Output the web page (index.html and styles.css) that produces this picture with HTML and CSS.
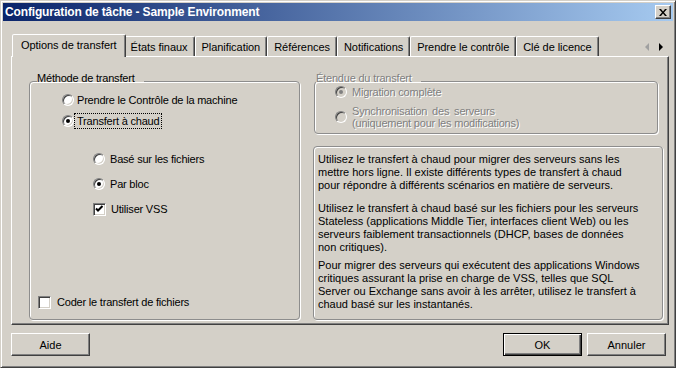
FILE: index.html
```html
<!DOCTYPE html>
<html>
  <head>
    <meta charset="UTF-8" />
    <title>Configuration de tâche - Sample Environment</title>
    <link rel="stylesheet" href="styles.css">
  </head>

  <body>
    <div class="window">
      <div class="titlebar">
        <span class="title">Configuration de tâche - Sample Environment</span>
        <span class="close">
          <svg width="8" height="7" viewBox="0 0 8 7"><path d="M0 0h2l2 2.5L6 0h2L5 3.5 8 7H6L4 4.5 2 7H0l3-3.5z" fill="#000"/></svg>
        </span>
      </div>

      <div class="tabs">
        <div class="tab active">Options de transfert</div>
        <div class="tab">États finaux</div>
        <div class="tab">Planification</div>
        <div class="tab">Références</div>
        <div class="tab">Notifications</div>
        <div class="tab">Prendre le contrôle</div>
        <div class="tab">Clé de licence</div>
        <div class="tab-scroll">
          <svg width="4" height="8" viewBox="0 0 4 8"><path d="M4 0v8L0 4z" fill="#a0a0a0"/></svg>
          <svg width="4" height="8" viewBox="0 0 4 8"><path d="M0 0v8l4-4z" fill="#000"/></svg>
        </div>
      </div>

      <div class="panel">
        <fieldset class="group method">
          <legend class="caption"><span>Méthode de transfert</span></legend>
          <div class="row main">
            <span class="radio"></span>
            <span class="lbl">Prendre le Contrôle de la machine</span>
          </div>
          <div class="row main">
            <span class="radio checked"></span>
            <span class="lbl focus">Transfert à chaud</span>
          </div>
          <div class="sub">
            <div class="row">
              <span class="radio"></span>
              <span class="lbl">Basé sur les fichiers</span>
            </div>
            <div class="row">
              <span class="radio checked"></span>
              <span class="lbl">Par bloc</span>
            </div>
            <div class="row">
              <span class="check">
                <svg width="9" height="9" viewBox="0 0 9 9"><path d="M1 3.5l2 2 4.5-4.5" fill="none" stroke="#000" stroke-width="2"/></svg>
              </span>
              <span class="lbl">Utiliser VSS</span>
            </div>
          </div>
          <div class="row encode">
            <span class="check"></span>
            <span class="lbl">Coder le transfert de fichiers</span>
          </div>
        </fieldset>

        <div class="side">
          <fieldset class="group scope disabled">
            <legend class="caption"><span>Étendue du transfert</span></legend>
            <div class="row">
              <span class="radio checked"></span>
              <span class="lbl">Migration complète</span>
            </div>
            <div class="row sync">
              <span class="radio"></span>
              <span class="lbl"><span class="spaced">Synchronisation des serveurs</span><br>(uniquement pour les modifications)</span>
            </div>
          </fieldset>

          <div class="info">
            <p>Utilisez le transfert à chaud pour migrer des serveurs sans les<br>mettre hors ligne. Il existe différents types de transfert à chaud<br>pour répondre à différents scénarios en matière de serveurs.</p>
            <p>Utilisez le transfert à chaud basé sur les fichiers pour les serveurs<br>Stateless (applications Middle Tier, interfaces client Web) ou les<br>serveurs faiblement transactionnels (DHCP, bases de données<br>non critiques).</p>
            <p class="last">Pour migrer des serveurs qui exécutent des applications Windows<br>critiques assurant la prise en charge de VSS, telles que SQL<br>Server ou Exchange sans avoir à les arrêter, utilisez le transfert à<br>chaud basé sur les instantanés.</p>
          </div>
        </div>
      </div>

      <div class="buttons">
        <button class="help">Aide</button>
        <button class="default">OK</button>
        <button>Annuler</button>
      </div>
    </div>
  </body>
</html>
```

FILE: styles.css
```css
html, body {
  margin: 0;
  padding: 0;
  background-color: #d4d0c8;
  font-family: "Liberation Sans", Arial, sans-serif;
  font-size: 11px;
  color: #000;
}

.window {
  width: 676px;
  height: 368px;
  box-sizing: border-box;
  display: flex;
  flex-direction: column;
  padding: 2px;
  border: 1px solid;
  border-color: #d4d0c8 #404040 #404040 #d4d0c8;
  box-shadow: inset 1px 1px #fff, inset -1px -1px #808080;
}

/* title bar */
.titlebar {
  height: 18px;
  display: flex;
  align-items: center;
  padding-left: 2px;
  background: linear-gradient(to right, #0a246a, #a6caf0);
}

.title {
  flex: 1;
  color: #fff;
  font-weight: bold;
  font-size: 12px;
  letter-spacing: -0.15px;
}

.close {
  width: 16px;
  height: 14px;
  box-sizing: border-box;
  margin-right: 2px;
  display: flex;
  align-items: center;
  justify-content: center;
  background-color: #d4d0c8;
  border: 1px solid;
  border-color: #fff #404040 #404040 #fff;
  box-shadow: inset -1px -1px #808080;
}

/* tabs */
.tabs {
  height: 22px;
  margin-top: 13px;
  padding-left: 11px;
  display: flex;
  align-items: flex-end;
  position: relative;
  z-index: 1;
}

.tab {
  height: 20px;
  box-sizing: border-box;
  padding: 0 6px;
  display: flex;
  align-items: center;
  border: 1px solid;
  border-bottom: none;
  border-color: #fff #404040 transparent #fff;
  border-radius: 2px 2px 0 0;
  box-shadow: inset -1px 0 #808080;
  letter-spacing: -0.05px;
}

.tab.active {
  height: 23px;
  margin: 0 -2px -1px;
  padding: 0 8px 2px;
  background-color: #d4d0c8;
  position: relative;
}

.tab-scroll {
  margin-left: auto;
  margin-right: 10px;
  align-self: center;
  display: flex;
  gap: 10px;
  padding-top: 4px;
}

/* panel */
.panel {
  height: 269px;
  box-sizing: border-box;
  margin: 0 4px 0 8px;
  padding: 19px 5px 4px 17px;
  display: flex;
  gap: 13px;
  border: 1px solid;
  border-color: #fff #404040 #404040 #fff;
  box-shadow: inset -1px -1px #808080;
}

.group {
  margin: 0;
  padding: 0;
  min-width: 0;
  display: flex;
  flex-direction: column;
  border: 1px solid #8d8d8d;
  border-radius: 4px;
  box-shadow: 1px 1px 0 #fff, inset 1px 1px 0 #fff;
}

.caption {
  height: 10px;
  line-height: 10px;
  padding: 0 9px 0 0;
}

.caption span {
  position: relative;
  top: -3px;
  letter-spacing: -0.2px;
}

.method {
  width: 271px;
  box-sizing: border-box;
  padding: 6px 0 9px;
}

.method .caption {
  margin-left: 7px;
}

.row {
  display: flex;
  align-items: center;
  height: 16px;
  letter-spacing: -0.2px;
}

.row .lbl {
  margin-left: 5px;
}

.main {
  margin-left: 32px;
}

.main + .main {
  margin-top: 5px;
}

.main .lbl {
  margin-left: 0;
  height: 14px;
  line-height: 14px;
  padding: 0 2px;
  border: 1px dotted transparent;
}

.main .lbl.focus {
  border-color: #000;
}

.sub {
  margin: 22px 0 0 63px;
  display: flex;
  flex-direction: column;
  gap: 9px;
}

.encode {
  margin: auto 0 0 8px;
}

.encode .lbl {
  margin-left: 6px;
}

/* radios and checkboxes */
.radio,
.check {
  flex: none;
  box-sizing: border-box;
  position: relative;
  background-color: #fff;
  border: 1px solid;
  border-color: #808080 #fff #fff #808080;
  box-shadow: inset 1px 1px #404040, inset -1px -1px #d4d0c8;
}

.radio {
  width: 12px;
  height: 12px;
  border-radius: 50%;
}

.radio.checked::after {
  content: "";
  position: absolute;
  left: 3px;
  top: 3px;
  width: 4px;
  height: 4px;
  border-radius: 50%;
  background-color: #000;
}

.check {
  width: 13px;
  height: 13px;
  padding: 1px;
}

.check svg {
  display: block;
}

/* disabled group */
.side {
  width: 350px;
  display: flex;
  flex-direction: column;
}

.scope {
  margin: 0 5px 0 1px;
  padding: 0 0 4px;
}

.scope .caption {
  margin-left: 1px;
}

.disabled {
  color: #808080;
}

.disabled .caption span,
.disabled .lbl {
  text-shadow: 1px 1px 0 #fff;
}

.disabled .row {
  margin-left: 20px;
  height: 12px;
  line-height: 12px;
}

.disabled .radio {
  background-color: #d4d0c8;
}

.disabled .radio.checked::after {
  background-color: #808080;
}

.disabled .sync {
  height: 24px;
  margin-top: 7px;
}

.spaced {
  word-spacing: 2px;
}

/* description */
.info {
  flex: 1;
  margin-top: 12px;
  padding: 6px 4px;
  border: 1px solid #8d8d8d;
  border-radius: 4px;
  box-shadow: 1px 1px 0 #fff, inset 1px 1px 0 #fff;
  line-height: 13px;
}

.info p {
  margin: 0;
}

.info p + p {
  margin-top: 10px;
}

.info p.last {
  margin-top: 5px;
}

/* buttons */
.buttons {
  display: flex;
  gap: 5px;
  margin-top: 8px;
  padding: 0 7px 0 8px;
}

button {
  width: 79px;
  height: 23px;
  padding: 0;
  font-family: "Liberation Sans", Arial, sans-serif;
  font-size: 11px;
  color: #000;
  background-color: #d4d0c8;
  border: 1px solid;
  border-color: #fff #404040 #404040 #fff;
  box-shadow: inset -1px -1px #808080;
}

button.help {
  margin-right: auto;
}

button.default {
  border-color: #000;
  box-shadow: inset 1px 1px #fff, inset -1px -1px #404040, inset -2px -2px #808080;
}
```
